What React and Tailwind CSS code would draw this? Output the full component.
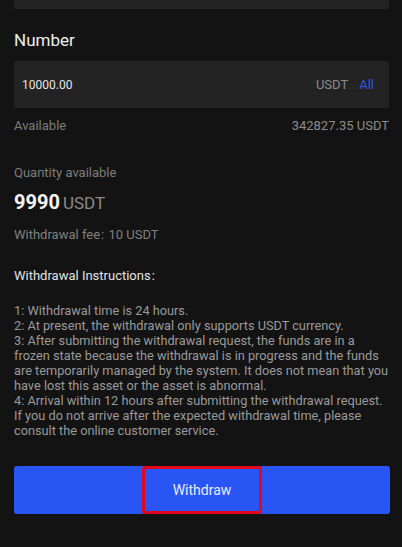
export default function App() {
  const font = { fontFamily: "Roboto, 'Noto Sans', sans-serif" };
  return (
    <div className="w-full h-[547px] bg-[#131313] px-[14px] overflow-hidden" style={font}>
      <div className="h-[9px] bg-[#232323] rounded-b-[2px] w-[375px]" />
      <div className="mt-[20px] text-[17px] leading-[22px] text-[#eeeeee]">Number</div>
      <div className="mt-[10px] h-[47px] w-[375px] bg-[#232323] rounded-[2px] flex items-center justify-between pl-[8px] pr-[15px]">
        <span className="text-[12px] text-[#e6e6e6]">10000.00</span>
        <span className="flex items-center text-[13px]">
          <span className="text-[#8a8a8a]">USDT</span>
          <span className="ml-[11px] text-[#3256e6]">All</span>
        </span>
      </div>
      <div className="mt-[9px] flex justify-between w-[375px] text-[13px] leading-[18px]">
        <span className="text-[#7c7c7c]">Available</span>
        <span className="text-[#8c8c8c]">342827.35 USDT</span>
      </div>
      <div className="mt-[29px] text-[13px] leading-[18px] text-[#7c7c7c]">Quantity available</div>
      <div className="mt-[7px] flex items-baseline leading-[26px]">
        <span className="text-[20px] font-bold text-[#f4f4f4]">9990</span>
        <span className="ml-[3px] text-[17px] text-[#8a8a8a]">USDT</span>
      </div>
      <div className="mt-[10px] text-[13px] leading-[18px] text-[#808080]">Withdrawal fee<span className="mx-[1px]">:</span> 10 USDT</div>
      <div className="mt-[23px] text-[13px] leading-[18px] text-[#e2e2e2]">Withdrawal Instructions<span className="ml-[1px]">:</span></div>
      <div className="mt-[18px] w-[376px] text-[12.75px] leading-[15px] text-[#9a9a9a]">
        <div>1: Withdrawal time is 24 hours.</div>
        <div>2: At present, the withdrawal only supports USDT currency.</div>
        <div>3: After submitting the withdrawal request, the funds are in a frozen state because the withdrawal is in progress and the funds are temporarily managed by the system. It does not mean that you have lost this asset or the asset is abnormal.</div>
        <div>4: Arrival within 12 hours after submitting the withdrawal request. If you do not arrive after the expected withdrawal time, please consult the online customer service.</div>
      </div>
      <div className="mt-[28px] h-[48px] w-[376px] bg-[#2955f5] rounded-[3px] flex justify-center">
        <div className="w-[120px] h-full border-[3px] border-[#e3061c] rounded-[3px] flex items-center justify-center text-[14px] text-[#e8ecff]">
          Withdraw
        </div>
      </div>
    </div>
  );
}
